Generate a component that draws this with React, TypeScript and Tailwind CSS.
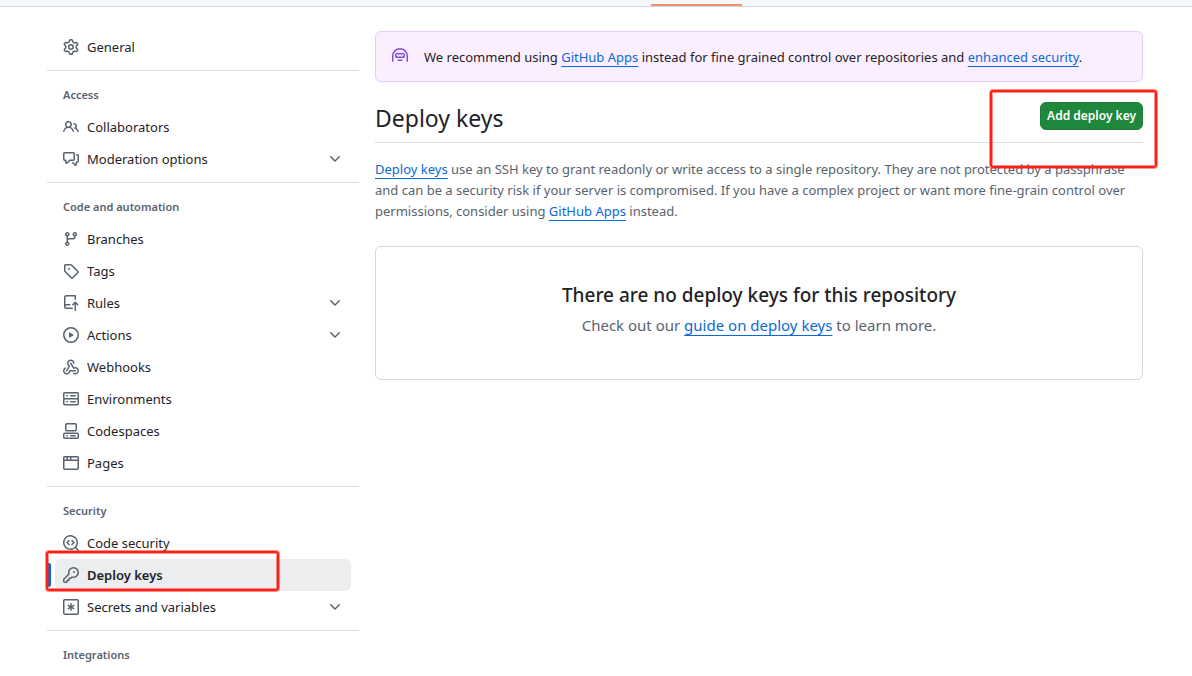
import type { ReactNode } from "react";

const paths = {
  gear: "M8 0a8.2 8.2 0 0 1 .701.031C9.444.095 9.99.645 10.16 1.29l.288 1.107c.018.066.079.158.212.224.231.114.454.243.668.386.123.082.233.09.299.071l1.103-.303c.644-.176 1.392.021 1.82.63.27.385.506.792.704 1.218.315.675.111 1.422-.364 1.891l-.814.806c-.049.048-.098.147-.088.294.016.257.016.515 0 .772-.01.147.038.246.088.294l.814.806c.475.469.679 1.216.364 1.891a7.977 7.977 0 0 1-.704 1.217c-.428.61-1.176.807-1.82.63l-1.102-.302c-.067-.019-.177-.011-.3.071a5.909 5.909 0 0 1-.668.386c-.133.066-.194.158-.211.224l-.29 1.106c-.168.646-.715 1.196-1.458 1.26a8.006 8.006 0 0 1-1.402 0c-.743-.064-1.289-.614-1.458-1.26l-.289-1.106c-.018-.066-.079-.158-.212-.224a5.738 5.738 0 0 1-.668-.386c-.123-.082-.233-.09-.299-.071l-1.103.303c-.644.176-1.392-.021-1.82-.63a8.12 8.12 0 0 1-.704-1.218c-.315-.675-.111-1.422.363-1.891l.815-.806c.05-.048.098-.147.088-.294a6.214 6.214 0 0 1 0-.772c.01-.147-.038-.246-.088-.294l-.815-.806C.635 6.045.431 5.298.746 4.623a7.92 7.92 0 0 1 .704-1.217c.428-.61 1.176-.807 1.82-.63l1.102.302c.067.019.177.011.3-.071.214-.143.437-.272.668-.386.133-.066.194-.158.211-.224l.29-1.106C6.009.645 6.556.095 7.299.03 7.53.01 7.764 0 8 0Zm-.571 1.525c-.036.003-.108.036-.137.146l-.289 1.105c-.147.561-.549.967-.998 1.189-.173.086-.34.183-.5.29-.417.278-.97.423-1.529.27l-1.103-.303c-.109-.03-.175.016-.195.045-.22.312-.412.644-.573.99-.014.031-.021.11.059.19l.815.806c.411.406.562.957.53 1.456a4.709 4.709 0 0 0 0 .582c.032.499-.119 1.05-.53 1.456l-.815.806c-.081.08-.073.159-.059.19.162.346.353.677.573.989.02.03.085.076.195.046l1.102-.303c.56-.153 1.113-.008 1.53.27.161.107.328.204.501.29.447.222.85.629.997 1.189l.289 1.105c.029.109.101.143.137.146a6.6 6.6 0 0 0 1.142 0c.036-.003.108-.036.137-.146l.289-1.105c.147-.561.549-.967.998-1.189.173-.086.34-.183.5-.29.417-.278.97-.423 1.529-.27l1.103.303c.109.029.175-.016.195-.045.22-.313.411-.644.573-.99.014-.031.021-.11-.059-.19l-.815-.806c-.411-.406-.562-.957-.53-1.456a4.709 4.709 0 0 0 0-.582c-.032-.499.119-1.05.53-1.456l.815-.806c.081-.08.073-.159.059-.19a6.464 6.464 0 0 0-.573-.989c-.02-.03-.085-.076-.195-.046l-1.102.303c-.56.153-1.113.008-1.53-.27a4.44 4.44 0 0 0-.501-.29c-.447-.222-.85-.629-.997-1.189l-.289-1.105c-.029-.11-.101-.143-.137-.146a6.6 6.6 0 0 0-1.142 0ZM11 8a3 3 0 1 1-6 0 3 3 0 0 1 6 0ZM9.5 8a1.5 1.5 0 1 0-3.001.001A1.5 1.5 0 0 0 9.5 8Z",
  people: "M2 5.5a3.5 3.5 0 1 1 5.898 2.549 5.508 5.508 0 0 1 3.034 4.084.75.75 0 1 1-1.482.235 4 4 0 0 0-7.9 0 .75.75 0 0 1-1.482-.236A5.507 5.507 0 0 1 3.102 8.05 3.493 3.493 0 0 1 2 5.5ZM11 4a3.001 3.001 0 0 1 2.22 5.018 5.01 5.01 0 0 1 2.56 3.012.749.749 0 0 1-.885.954.752.752 0 0 1-.549-.514 3.507 3.507 0 0 0-2.522-2.372.75.75 0 0 1-.574-.73v-.352a.75.75 0 0 1 .416-.672A1.5 1.5 0 0 0 11 5.5.75.75 0 0 1 11 4Zm-5.5-.5a2 2 0 1 0-.001 3.999A2 2 0 0 0 5.5 3.5Z",
  discussion: "M1.75 1h8.5c.966 0 1.75.784 1.75 1.75v5.5A1.75 1.75 0 0 1 10.25 10H7.061l-2.574 2.573A1.458 1.458 0 0 1 2 11.543V10h-.25A1.75 1.75 0 0 1 0 8.25v-5.5C0 1.784.784 1 1.75 1ZM1.5 2.75v5.5c0 .138.112.25.25.25h1a.75.75 0 0 1 .75.75v2.19l2.72-2.72a.749.749 0 0 1 .53-.22h3.5a.25.25 0 0 0 .25-.25v-5.5a.25.25 0 0 0-.25-.25h-8.5a.25.25 0 0 0-.25.25Zm13 2a.25.25 0 0 0-.25-.25h-.5a.75.75 0 0 1 0-1.5h.5c.966 0 1.75.784 1.75 1.75v5.5A1.75 1.75 0 0 1 14.25 12H14v1.543a1.458 1.458 0 0 1-2.487 1.03L9.22 12.28a.749.749 0 0 1 .326-1.275.749.749 0 0 1 .734.215l2.22 2.22v-2.19a.75.75 0 0 1 .75-.75h1a.25.25 0 0 0 .25-.25Z",
  branch: "M9.5 3.25a2.25 2.25 0 1 1 3 2.122V6A2.5 2.5 0 0 1 10 8.5H6a1 1 0 0 0-1 1v1.128a2.251 2.251 0 1 1-1.5 0V5.372a2.25 2.25 0 1 1 1.5 0v1.836A2.493 2.493 0 0 1 6 7h4a1 1 0 0 0 1-1v-.628A2.25 2.25 0 0 1 9.5 3.25Zm-6 0a.75.75 0 1 0 1.5 0 .75.75 0 0 0-1.5 0Zm8.25-.75a.75.75 0 1 0 0 1.5.75.75 0 0 0 0-1.5ZM4.25 12a.75.75 0 1 0 0 1.5.75.75 0 0 0 0-1.5Z",
  tag: "M1 7.775V2.75C1 1.784 1.784 1 2.75 1h5.025c.464 0 .91.184 1.238.513l6.25 6.25a1.75 1.75 0 0 1 0 2.474l-5.026 5.026a1.75 1.75 0 0 1-2.474 0l-6.25-6.25A1.752 1.752 0 0 1 1 7.775Zm1.5 0c0 .066.026.13.073.177l6.25 6.25a.25.25 0 0 0 .354 0l5.025-5.025a.25.25 0 0 0 0-.354l-6.25-6.25a.25.25 0 0 0-.177-.073H2.75a.25.25 0 0 0-.25.25ZM6 5a1 1 0 1 1 0 2 1 1 0 0 1 0-2Z",
  repoPush: "M1 2.5A2.5 2.5 0 0 1 3.5 0h8.75a.75.75 0 0 1 .75.75v3.5a.75.75 0 0 1-1.5 0V1.5h-8a1 1 0 0 0-1 1v6.708A2.493 2.493 0 0 1 3.5 9h3.25a.75.75 0 0 1 0 1.5H3.5a1 1 0 0 0 0 2h5.75a.75.75 0 0 1 0 1.5H3.5A2.5 2.5 0 0 1 1 11.5Zm13.23 7.79h-.001l-1.224-1.224v6.184a.75.75 0 0 1-1.5 0V9.066L10.28 10.29a.75.75 0 0 1-1.06-1.061l2.505-2.504a.75.75 0 0 1 1.06 0L15.29 9.23a.751.751 0 0 1-.018 1.042.751.751 0 0 1-1.042.018Z",
  play: "M8 0a8 8 0 1 1 0 16A8 8 0 0 1 8 0ZM1.5 8a6.5 6.5 0 1 0 13 0 6.5 6.5 0 0 0-13 0Zm4.879-2.773 4.264 2.559a.25.25 0 0 1 0 .428l-4.264 2.559A.25.25 0 0 1 6 10.559V5.442a.25.25 0 0 1 .379-.215Z",
  webhook: "M5.5 4.25a2.25 2.25 0 0 1 4.5 0 .75.75 0 0 0 1.5 0 3.75 3.75 0 1 0-6.14 2.889l-2.272 4.258a.75.75 0 0 0 1.324.706L7 7.25a.75.75 0 0 0-.309-1.015A2.25 2.25 0 0 1 5.5 4.25Z M7.364 3.607a.75.75 0 0 1 1.03.257l2.608 4.349a3.75 3.75 0 1 1-.628 6.785.75.75 0 0 1 .752-1.299 2.25 2.25 0 1 0-.033-3.88.75.75 0 0 1-1.03-.256L7.107 4.636a.75.75 0 0 1 .257-1.03Z M2.9 8.776A.75.75 0 0 1 2.625 9.8 2.25 2.25 0 1 0 6 11.75a.75.75 0 0 1 .75-.751h5.5a.75.75 0 0 1 0 1.5H7.425a3.751 3.751 0 1 1-5.55-3.998.75.75 0 0 1 1.024.274Z",
  server: "M1.75 1h12.5c.966 0 1.75.784 1.75 1.75v4c0 .372-.116.717-.314 1 .198.283.314.628.314 1v4a1.75 1.75 0 0 1-1.75 1.75H1.75A1.75 1.75 0 0 1 0 12.75v-4c0-.358.109-.707.314-1a1.739 1.739 0 0 1-.314-1v-4C0 1.784.784 1 1.75 1ZM1.5 2.75v4c0 .138.112.25.25.25h12.5a.25.25 0 0 0 .25-.25v-4a.25.25 0 0 0-.25-.25H1.75a.25.25 0 0 0-.25.25Zm.25 5.75a.25.25 0 0 0-.25.25v4c0 .138.112.25.25.25h12.5a.25.25 0 0 0 .25-.25v-4a.25.25 0 0 0-.25-.25ZM7 4.75A.75.75 0 0 1 7.75 4h4.5a.75.75 0 0 1 0 1.5h-4.5A.75.75 0 0 1 7 4.75ZM7.75 10h4.5a.75.75 0 0 1 0 1.5h-4.5a.75.75 0 0 1 0-1.5ZM3 4.75A.75.75 0 0 1 3.75 4h.5a.75.75 0 0 1 0 1.5h-.5A.75.75 0 0 1 3 4.75ZM3.75 10h.5a.75.75 0 0 1 0 1.5h-.5a.75.75 0 0 1 0-1.5Z",
  codespaces: "M0 11.25c0-.966.784-1.75 1.75-1.75h12.5c.966 0 1.75.784 1.75 1.75v3A1.75 1.75 0 0 1 14.25 16H1.75A1.75 1.75 0 0 1 0 14.25Zm2-9.5C2 .784 2.784 0 3.75 0h8.5C13.216 0 14 .784 14 1.75v5a1.75 1.75 0 0 1-1.75 1.75h-8.5A1.75 1.75 0 0 1 2 6.75Zm1.75-.25a.25.25 0 0 0-.25.25v5c0 .138.112.25.25.25h8.5a.25.25 0 0 0 .25-.25v-5a.25.25 0 0 0-.25-.25Zm-2 9.5a.25.25 0 0 0-.25.25v3c0 .138.112.25.25.25h12.5a.25.25 0 0 0 .25-.25v-3a.25.25 0 0 0-.25-.25Z M7 12.75a.75.75 0 0 1 .75-.75h4.5a.75.75 0 0 1 0 1.5h-4.5a.75.75 0 0 1-.75-.75Zm-4 0a.75.75 0 0 1 .75-.75h.5a.75.75 0 0 1 0 1.5h-.5a.75.75 0 0 1-.75-.75Z",
  browser: "M0 2.75C0 1.784.784 1 1.75 1h12.5c.966 0 1.75.784 1.75 1.75v10.5A1.75 1.75 0 0 1 14.25 15H1.75A1.75 1.75 0 0 1 0 13.25ZM14.5 6h-13v7.25c0 .138.112.25.25.25h12.5a.25.25 0 0 0 .25-.25Zm-6-3.5v2h6V2.75a.25.25 0 0 0-.25-.25ZM5 2.5v2h2v-2Zm-3.25 0a.25.25 0 0 0-.25.25V4.5h2v-2Z",
  codescan: "M8.47 4.97a.75.75 0 0 0 0 1.06L9.94 7.5 8.47 8.97a.75.75 0 1 0 1.06 1.06l2-2a.75.75 0 0 0 0-1.06l-2-2a.75.75 0 0 0-1.06 0ZM6.53 6.03a.75.75 0 0 0-1.06-1.06l-2 2a.75.75 0 0 0 0 1.06l2 2a.75.75 0 1 0 1.06-1.06L5.06 7.5l1.47-1.47Z M12.246 13.307a7.501 7.501 0 1 1 1.06-1.06l2.474 2.473a.749.749 0 0 1-.326 1.275.749.749 0 0 1-.734-.215ZM1.5 7.5a6.002 6.002 0 0 0 3.608 5.504 6.002 6.002 0 0 0 6.486-1.117.748.748 0 0 1 .292-.293A6 6 0 1 0 1.5 7.5Z",
  key: "M10.5 0a5.499 5.499 0 1 1-1.288 10.848l-.932.932a.749.749 0 0 1-.53.22H7v.75a.749.749 0 0 1-.22.53l-.5.5a.749.749 0 0 1-.53.22H5v.75a.749.749 0 0 1-.22.53l-.5.5a.749.749 0 0 1-.53.22h-2A1.75 1.75 0 0 1 0 14.25v-2c0-.199.079-.389.22-.53l4.932-4.932A5.5 5.5 0 0 1 10.5 0Zm-4 5.5c-.001.431.069.86.205 1.269a.75.75 0 0 1-.181.768L1.5 12.56v1.69c0 .138.112.25.25.25h1.69l.06-.06v-1.19a.75.75 0 0 1 .75-.75h1.19l.06-.06v-1.19a.75.75 0 0 1 .75-.75h1.19l1.023-1.025a.75.75 0 0 1 .768-.18A4 4 0 1 0 6.5 5.5ZM11 6a1 1 0 1 1 0-2 1 1 0 0 1 0 2Z",
  asterisk: "M0 1.75C0 .784.784 0 1.75 0h12.5C15.216 0 16 .784 16 1.75v12.5A1.75 1.75 0 0 1 14.25 16H1.75A1.75 1.75 0 0 1 0 14.25ZM1.75 1.5a.25.25 0 0 0-.25.25v12.5c0 .138.112.25.25.25h12.5a.25.25 0 0 0 .25-.25V1.75a.25.25 0 0 0-.25-.25Z M8 4a.75.75 0 0 1 .75.75V6.7l1.69-.975a.75.75 0 0 1 .75 1.3L9.5 8l1.69.976a.75.75 0 0 1-.75 1.298L8.75 9.3v1.951a.75.75 0 0 1-1.5 0V9.299l-1.69.976a.75.75 0 0 1-.75-1.3L6.5 8l-1.69-.975a.75.75 0 0 1 .75-1.3l1.69.976V4.75A.75.75 0 0 1 8 4Z",
  chevron: "M12.78 5.22a.749.749 0 0 1 0 1.06l-4.25 4.25a.749.749 0 0 1-1.06 0L3.22 6.28a.749.749 0 1 1 1.06-1.06L8 8.939l3.72-3.719a.749.749 0 0 1 1.06 0Z",
  hubot: "M0 8a8 8 0 1 1 16 0v5.25a.75.75 0 0 1-1.5 0V8a6.5 6.5 0 1 0-13 0v5.25a.75.75 0 0 1-1.5 0Zm5.5 4.25a.75.75 0 0 1 .75-.75h3.5a.75.75 0 0 1 0 1.5h-3.5a.75.75 0 0 1-.75-.75ZM3 6.75C3 5.784 3.784 5 4.75 5h6.5c.966 0 1.75.784 1.75 1.75v1.5A1.75 1.75 0 0 1 11.25 10h-6.5A1.75 1.75 0 0 1 3 8.25Zm1.47-.53a.75.75 0 0 0 0 1.06l1.5 1.5a.75.75 0 0 0 1.06 0l.97-.97.97.97a.75.75 0 0 0 1.06 0l1.5-1.5a.75.75 0 0 0-1.06-1.06l-.97.97-.97-.97a.75.75 0 0 0-1.06 0l-.97.97-.97-.97a.75.75 0 0 0-1.06 0Z",
};

type IconName = keyof typeof paths;

function Icon({ name, className }: { name: IconName; className: string }) {
  return (
    <svg viewBox="0 0 16 16" aria-hidden="true" fill="currentColor" className={`size-4 shrink-0 ${className}`}>
      <path d={paths[name]} />
    </svg>
  );
}

interface Item {
  icon: IconName;
  label: string;
  expandable?: boolean;
  current?: boolean;
}

const groups: { title?: string; items: Item[] }[] = [
  { items: [{ icon: "gear", label: "General" }] },
  {
    title: "Access",
    items: [
      { icon: "people", label: "Collaborators" },
      { icon: "discussion", label: "Moderation options", expandable: true },
    ],
  },
  {
    title: "Code and automation",
    items: [
      { icon: "branch", label: "Branches" },
      { icon: "tag", label: "Tags" },
      { icon: "repoPush", label: "Rules", expandable: true },
      { icon: "play", label: "Actions", expandable: true },
      { icon: "webhook", label: "Webhooks" },
      { icon: "server", label: "Environments" },
      { icon: "codespaces", label: "Codespaces" },
      { icon: "browser", label: "Pages" },
    ],
  },
  {
    title: "Security",
    items: [
      { icon: "codescan", label: "Code security" },
      { icon: "key", label: "Deploy keys", current: true },
      { icon: "asterisk", label: "Secrets and variables", expandable: true },
    ],
  },
  { title: "Integrations", items: [] },
];

const rowClass = "flex h-8 w-full items-center gap-2 rounded-md px-2 text-left";

function NavItem({ icon, label, expandable, current }: Item) {
  if (expandable) {
    return (
      <li className="px-2">
        <button type="button" aria-expanded="false" className={rowClass}>
          <Icon name={icon} className="text-[#59636e]" />
          <span className="flex-1">{label}</span>
          <Icon name="chevron" className="text-[#59636e]" />
        </button>
      </li>
    );
  }
  if (current) {
    return (
      <li className="relative px-2">
        <span className="absolute top-1 left-0 h-6 w-1 rounded-md bg-[#0969da]" />
        <a href="#deploy-keys" aria-current="page" className={`${rowClass} bg-[#ecedef] font-semibold`}>
          <Icon name={icon} className="text-[#59636e]" />
          <span>{label}</span>
        </a>
        <Highlight className="-top-2 -left-px h-10 w-[233px]" />
      </li>
    );
  }
  return (
    <li className="px-2">
      <a href={`#${label.toLowerCase().replace(/ /g, "-")}`} className={rowClass}>
        <Icon name={icon} className="text-[#59636e]" />
        <span>{label}</span>
      </a>
    </li>
  );
}

function Highlight({ className }: { className: string }) {
  return (
    <span
      aria-hidden="true"
      className={`pointer-events-none absolute rounded-[3px] border-2 border-[#ff2015] ring-1 ring-[#ff2015]/50 inset-ring-1 inset-ring-[#ff2015]/50 ${className}`}
    />
  );
}

function TextLink({ href, children }: { href: string; children: ReactNode }) {
  return (
    <a href={href} className="text-[#0969da] underline underline-offset-4">
      {children}
    </a>
  );
}

export default function App() {
  return (
    <div className="bg-white font-['Noto_Sans','Open_Sans',sans-serif] text-[13px] leading-[21px] text-[#1f2328]">
      <header className="flex h-[7px] items-end justify-center border-b border-[#d1d9e0] bg-[#f6f8fa] pl-50">
        <span className="h-0.5 w-[91px] bg-[#fd8c73]" />
      </header>

      <div className="flex items-start gap-4 pt-6 pr-[49px] pl-[47px]">
        <nav aria-label="Repository settings" className="w-[312px] shrink-0">
          {groups.map((group, index) => (
            <section key={group.title ?? "general"} className={index > 0 ? "mt-[7px] border-t border-[#d1d9e0]/80" : ""}>
              {group.title && (
                <h2 className="flex h-10 items-center px-4 pt-2 text-[11px] leading-4 font-semibold text-[#59636e]">
                  {group.title}
                </h2>
              )}
              <ul>
                {group.items.map((item) => (
                  <NavItem key={item.label} {...item} />
                ))}
              </ul>
            </section>
          ))}
        </nav>

        <main className="min-w-0 flex-1">
          <div className="flex gap-4 rounded-md border border-[#e5ccff] bg-[#fbefff] px-4 pt-[15px] pb-[13px]">
            <Icon name="hubot" className="mt-px text-[#8250df]" />
            <p>
              We recommend using <TextLink href="#apps">GitHub Apps</TextLink> instead for fine grained control over
              repositories and <TextLink href="#enhanced-security">enhanced security</TextLink>.
            </p>
          </div>

          <div className="relative mt-5 flex items-start justify-between border-b border-[#d1d9e0]/80 pb-3">
            <h1 className="text-[23px] leading-8 -mb-1">Deploy keys</h1>
            <button
              type="button"
              className="h-7 rounded-md border border-[#1f7b38] bg-[#1f883d] px-1.5 text-xs font-semibold text-white"
            >
              Add deploy key
            </button>
            <Highlight className="-top-3 -right-3.5 h-[78px] w-[167px]" />
          </div>

          <p className="mt-4 text-[#59636e]">
            <TextLink href="#about">Deploy keys</TextLink> use an SSH key to grant readonly or write access to a single
            repository. They are not protected by a passphrase and can be a security risk if your server is compromised.
            If you have a complex project or want more fine-grain control over permissions, consider using{" "}
            <TextLink href="#apps">GitHub Apps</TextLink> instead.
          </p>

          <section className="mt-6 rounded-md border border-[#d1d9e0] px-8 pt-8 pb-10 text-center">
            <h2 className="text-[19px] leading-8 font-medium">There are no deploy keys for this repository</h2>
            <p className="text-[15px] leading-7 text-[#59636e]">
              Check out our <TextLink href="#guide">guide on deploy keys</TextLink> to learn more.
            </p>
          </section>
        </main>
      </div>
    </div>
  );
}
